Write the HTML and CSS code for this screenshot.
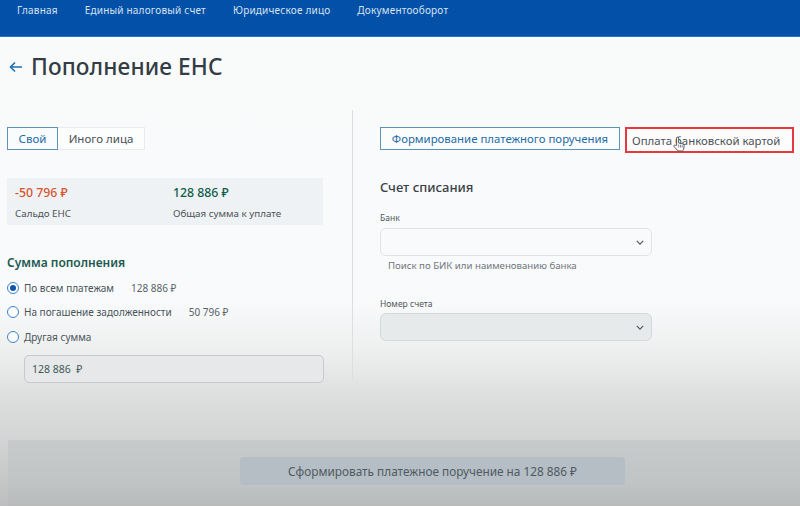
FILE: index.html
```html
<!DOCTYPE html>
<html lang="ru">
<head>
<meta charset="utf-8">
<title>Пополнение ЕНС</title>
<link rel="stylesheet" href="styles.css">
</head>
<body>
<div class="page">
  <header class="topbar">
    <nav class="nav">
      <a>Главная</a>
      <a>Единый налоговый счет</a>
      <a>Юридическое лицо</a>
      <a>Документооборот</a>
    </nav>
  </header>
  <div class="title-row">
    <svg class="back" width="14" height="12" viewBox="0 0 14 12"><path d="M13 6H1.5M6 1.5 1.5 6 6 10.5" fill="none" stroke="#1a6fb5" stroke-width="1.6"/></svg>
    <h1>Пополнение ЕНС</h1>
  </div>
  <main class="columns">
    <section class="left">
      <div class="tabs">
        <span class="tab tab-active">Свой</span>
        <span class="tab tab-plain">Иного лица</span>
      </div>
      <div class="summary">
        <div class="sum-col sum-a">
          <div class="value red">-50 796 ₽</div>
          <div class="caption">Сальдо ЕНС</div>
        </div>
        <div class="sum-col">
          <div class="value green">128 886 ₽</div>
          <div class="caption">Общая сумма к уплате</div>
        </div>
      </div>
      <h3 class="amount-title">Сумма пополнения</h3>
      <div class="radios">
        <div class="radio-row"><span class="radio radio-on"></span><span class="radio-label">По всем платежам</span><span class="radio-val">128 886 ₽</span></div>
        <div class="radio-row"><span class="radio"></span><span class="radio-label">На погашение задолженности</span><span class="radio-val">50 796 ₽</span></div>
        <div class="radio-row"><span class="radio"></span><span class="radio-label">Другая сумма</span></div>
      </div>
      <div class="amount-input">128 886&nbsp; ₽</div>
    </section>
    <div class="divider"></div>
    <section class="right">
      <div class="pay-tabs">
        <span class="pay-tab pay-active">Формирование платежного поручения</span>
        <span class="pay-tab pay-card">Оплата банковской картой
          <svg class="cursor" width="12" height="16" viewBox="0 0 12 16"><path d="M3.6 9.5V2.2a1 1 0 0 1 2 0V7l4 .9c1 .2 1.6 1 1.5 2l-.4 3.2c-.1 1-.8 1.9-2 1.9H6c-.8 0-1.400-.4-1.900-1L1 10.600c-.7-1 .6-2 1.500-1.300z" fill="#fff" stroke="#4a4f55" stroke-width=".9"/><path d="M5.700 8.500v3M7.500 8.800v2.700M9.200 9.200v2.300" stroke="#4a4f55" stroke-width=".7"/></svg>
        </span>
      </div>
      <h2 class="acc-title">Счет списания</h2>
      <label class="field-label">Банк</label>
      <div class="select">
        <svg width="8" height="5" viewBox="0 0 10 6"><path d="M1 1l4 4 4-4" fill="none" stroke="#4d5a64" stroke-width="1.500"/></svg>
      </div>
      <div class="hint">Поиск по БИК или наименованию банка</div>
      <label class="field-label label-second">Номер счета</label>
      <div class="select select-gray">
        <svg width="8" height="5" viewBox="0 0 10 6"><path d="M1 1l4 4 4-4" fill="none" stroke="#4d5a64" stroke-width="1.500"/></svg>
      </div>
    </section>
  </main>
  <footer class="footer">
    <div class="submit">Сформировать платежное поручение на 128 886 ₽</div>
  </footer>
</div>
</body>
</html>
```
FILE: styles.css
```css
* { box-sizing: border-box; }
html, body { margin: 0; padding: 0; }
body {
  width: 800px;
  height: 506px;
  overflow: hidden;
  font-family: "Noto Sans", "Open Sans", sans-serif;
  color: #3a4249;
}
.page {
  height: 506px;
  display: flex;
  flex-direction: column;
  background: linear-gradient(180deg, #f9fbfb 0, #f8fafb 300px, #eef0f0 350px, #dcdddd 400px, #d3d4d4 440px, #bdbfbf 506px);
}
.topbar {
  height: 37px;
  flex: none;
  background: #0350a8;
  border-bottom: 1px solid #1a78d0;
  padding: 3px 0 0 17px;
}
.nav { display: flex; gap: 27px; font-size: 10px; line-height: 15px; color: #d6e2f0; letter-spacing: .2px; }
.title-row {
  flex: none;
  height: 62px;
  display: flex;
  align-items: center;
  padding: 0 0 2px 9px;
  gap: 8px;
}
.back { flex: none; }
h1 { margin: 0; font-size: 22.700px; font-weight: 500; color: #343c44; line-height: 30px; letter-spacing: .1px; }
.columns { flex: none; height: 341px; display: flex; padding-top: 11px; }
.left { width: 324px; margin-left: 7px; padding-top: 17px; flex: none; }
.tabs { display: flex; height: 23px; }
.tab { display: flex; align-items: center; justify-content: center; font-size: 11.500px; }
.tab-active { width: 51px; border: 1px solid #5b94b4; color: #1f6ba6; background: #f8fcfd; }
.tab-plain { width: 87px; border: 1px solid #e8eaec; border-left: 0; color: #4b5157; background: #fcfdfd; }
.summary {
  margin-top: 28px;
  height: 47px;
  width: 316px;
  display: flex;
  padding: 7px 8px 0;
  background: #eff2f4;
}
.sum-col { display: flex; flex-direction: column; }
.sum-a { width: 158px; }
.value { font-size: 12.300px; line-height: 16px; font-weight: 500; }
.red { color: #d9532f; }
.green { color: #0f5c49; }
.caption { font-size: 9.800px; line-height: 14px; margin-top: 6px; color: #4c5358; }
.amount-title { margin: 30px 0 0; font-size: 12px; line-height: 16px; font-weight: 600; color: #1d5a50; }
.radios { margin-top: 10px; display: flex; flex-direction: column; gap: 11.500px; }
.radio-row { display: flex; align-items: center; height: 13px; font-size: 10px; color: #4a5459; }
.radio { width: 12px; height: 12px; border-radius: 50%; border: 1px solid #3f83c4; background: #fbfcfd; flex: none; margin-right: 5px; display: flex; align-items: center; justify-content: center; }
.radio-on::after { content: ""; width: 6px; height: 6px; border-radius: 50%; background: #0b55b0; }
.radio-val { margin-left: 17px; color: #5a6268; }
.amount-input {
  margin: 12px 0 0 17px;
  width: 300px;
  height: 28px;
  border: 1px solid #c5cacc;
  border-radius: 5px;
  background: #e6e8e9;
  display: flex;
  align-items: center;
  padding-left: 7px;
  font-size: 10.500px;
  color: #3f5a56;
}
.divider { width: 1px; height: 271px; background: #dbdfe1; margin-left: 21px; flex: none; }
.right { flex: 1; padding: 17px 0 0 27px; }
.pay-tabs { display: flex; align-items: flex-start; height: 26px; }
.pay-tab { font-size: 11.400px; display: flex; align-items: center; }
.pay-active { width: 240px; height: 23px; border: 1px solid #5b94b4; color: #1f6ba6; justify-content: center; background: #fbfdfd; }
.pay-card { position: relative; margin-left: 5px; width: 169px; height: 26px; border: 2px solid #e8373f; padding-left: 5px; color: #4b5157; background: #fdfdfd; }
.cursor { position: absolute; left: 46px; top: 7px; }
.acc-title { margin: 25px 0 0; font-size: 13px; line-height: 18px; font-weight: 500; color: #3a4046; }
.field-label { display: block; font-size: 8.500px; line-height: 12px; color: #50575c; }
.acc-title + .field-label { margin-top: 16px; }
.label-second { margin-top: 25px; }
.select {
  margin-top: 4px;
  width: 272px;
  height: 28px;
  border: 1px solid #dfe3e6;
  border-radius: 6px;
  background: #f9fafb;
  display: flex;
  align-items: center;
  justify-content: flex-end;
  padding-right: 7px;
}
.label-second + .select { margin-top: 3px; }
.select-gray { background: #e7eaeb; border-color: #d3d8da; }
.hint { margin: 3px 0 0 8px; font-size: 9.650px; line-height: 14px; color: #70777c; }
.footer {
  flex: 1;
  display: flex;
  padding-top: 17px;
  background: linear-gradient(180deg, #c6caca 0, #c1c5c5 40px, #b9bbbb 66px);
  margin-left: 8px;
}
.submit {
  margin-left: 232px;
  width: 385px;
  flex: none;
  height: 28px;
  border-radius: 4px;
  background: #b4bec4;
  color: #4f5a62;
  font-size: 11.800px;
  display: flex;
  align-items: center;
  justify-content: center;
}
```
